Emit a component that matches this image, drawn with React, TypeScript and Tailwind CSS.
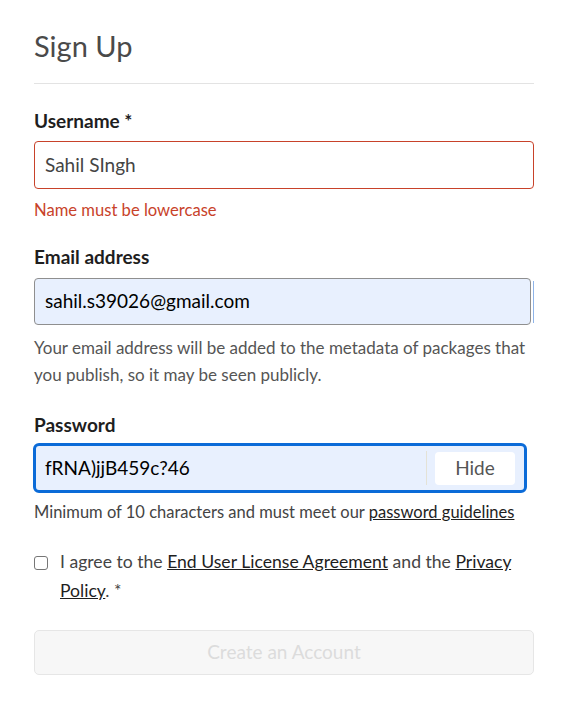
import React from "react";

const font = { fontFamily: '"Lato", "Liberation Sans", sans-serif' };

// npm-style sign up form, mid-fill with a validation error on the username.
export default function App() {
  return (
    <div className="min-h-screen bg-white text-[#333]" style={font}>
      <div className="w-[500px] ml-[34px] pt-[26px]">
        <h1 className="text-[29px] leading-[40px] text-[#4a4a4a] font-normal">Sign Up</h1>
        <div className="mt-[17px] border-t border-[#e3e3e3]" />

        <form className="mt-[25px]">
          <label className="block text-[19px] font-bold text-[#1e1e1e] leading-[24px]">
            Username *
          </label>
          <div className="mt-[8px] h-[48px] rounded-[4px] border border-[#c8422a] flex items-center px-[10px] text-[19px] text-[#444]">
            Sahil SIngh
          </div>
          <div className="mt-[10px] text-[16.6px] leading-[22px] text-[#c8422a]">Name must be lowercase</div>

          <label className="block mt-[24px] text-[19px] font-bold text-[#1e1e1e] leading-[24px]">
            Email address
          </label>
          <div className="mt-[9px] flex items-center">
            <div className="h-[47px] w-[500px] rounded-[4px] border border-[#8f8f8f] bg-[#e8f0fe] flex items-center px-[10px] text-[19px] text-black">
              sahil.s39026@gmail.com
            </div>
            <div className="ml-[2px] h-[42px] w-px bg-[#8fb4e8]" />
          </div>
          <p className="mt-[9px] text-[17px] leading-[27px] text-[#555]">
            Your email address will be added to the metadata of packages that you publish, so it may be seen publicly.
          </p>

          <label className="block mt-[25px] text-[19px] font-bold text-[#1e1e1e] leading-[24px]">
            Password
          </label>
          <div className="mt-[6px] -ml-px w-[494px] h-[50px] rounded-[6px] border-[3px] border-[#0b6bd8] bg-[#e8f0fe] flex items-center pl-[9px] pr-[9px]">
            <span className="flex-1 text-[19px] text-black">fRNA)jjB459c?46</span>
            <div className="h-[34px] w-px bg-[#e4e2d6] mr-[8px]" />
            <button
              type="button"
              className="w-[80px] h-[33px] rounded-[4px] bg-white text-[19px] text-[#555]"
              style={font}
            >
              Hide
            </button>
          </div>
          <p className="mt-[7px] text-[16.5px] leading-[24px] text-[#444]">
            Minimum of 10 characters and must meet our{" "}
            <a className="underline text-[#1e1e1e]">password guidelines</a>
          </p>

          <div className="mt-[23px] flex items-start">
            <span className="mt-[9px] h-[14px] w-[14px] shrink-0 rounded-[3px] border border-[#767676] bg-white" />
            <p className="ml-[12px] text-[17.6px] leading-[29px] text-[#444]">
              I agree to the <a className="underline text-[#1e1e1e]">End User License Agreement</a> and the{" "}
              <a className="underline text-[#1e1e1e]">Privacy</a>{" "}
              <a className="underline text-[#1e1e1e]">Policy</a>. *
            </p>
          </div>

          <button
            type="button"
            disabled
            className="mt-[25px] w-[500px] h-[45px] rounded-[5px] border border-[#e6e6e6] bg-[#f7f7f7] text-[19px] text-[#dcdcdc]"
            style={font}
          >
            Create an Account
          </button>
        </form>
      </div>
    </div>
  );
}
